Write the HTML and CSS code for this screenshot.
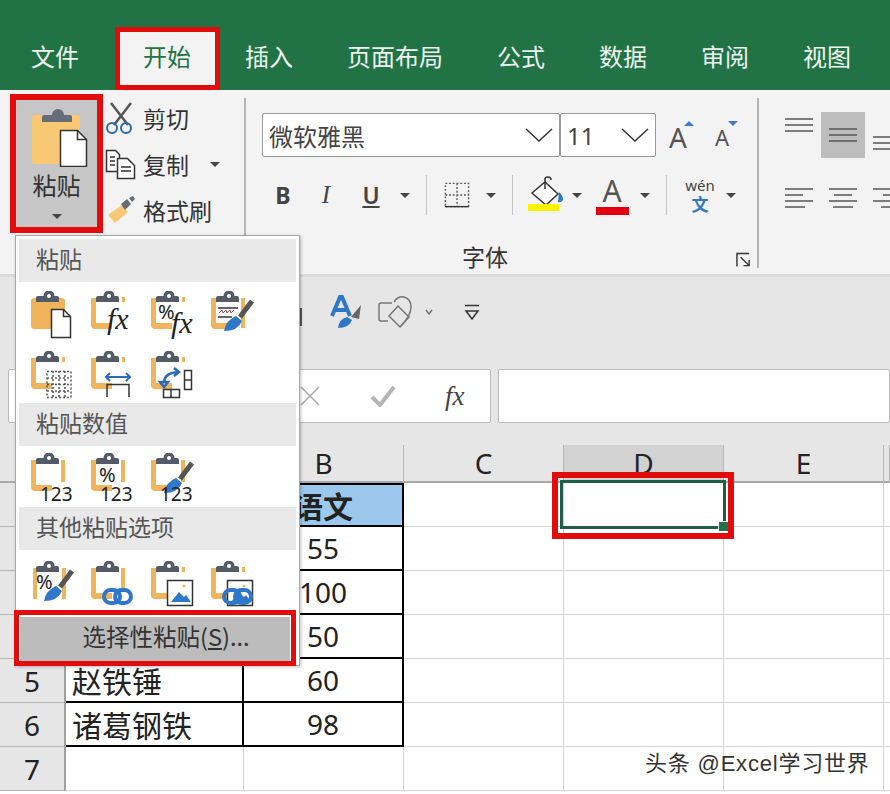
FILE: index.html
```html
<!DOCTYPE html>
<html lang="zh-CN">
<head>
<meta charset="utf-8">
<title>Excel 粘贴</title>
<link rel="stylesheet" href="styles.css">
</head>
<body>
<svg class="defs" aria-hidden="true">
  <symbol id="clip" viewBox="0 0 44 48"><path class="f-clip" d="M6 11V7q0-2 2-2h5.500a5.500 5.500 0 0 1 11 0H27q2 0 2 2v4z"/><circle class="f-white" cx="19" cy="5" r="2"/></symbol>
  <symbol id="left" viewBox="0 0 44 48"><path class="f-or" d="M1 7h5v25h16v6H5q-4 0-4-4z"/></symbol>
  <symbol id="sr" viewBox="0 0 44 48"><path class="f-or" d="M32 6h3v5h-3z"/></symbol>
  <symbol id="lr" viewBox="0 0 44 48"><path class="f-or" d="M31 7h4v22h-4z"/></symbol>
  <symbol id="brush" viewBox="0 0 44 48"><path class="s-dk5" d="M30 26 42 10"/><path class="f-bl" d="M14 40q2-11 12-15l6 5q-4 10-18 10z"/></symbol>
  <symbol id="link" viewBox="0 0 44 48"><rect class="s-bl" x="14" y="29" width="16" height="13" rx="6.500"/><rect class="s-bl" x="25" y="29" width="16" height="13" rx="6.500"/></symbol>
  <symbol id="pic" viewBox="0 0 44 48"><rect class="f-wd" x="17.500" y="19.500" width="25" height="25"/><path class="f-bl" d="M21 41l8-10 5 5 2-2 5 7z"/><circle class="f-or" cx="34" cy="25" r="1.500"/></symbol>
</svg>

<div class="app">
  <nav class="tabs">
    <div class="tab tab-first">文件</div>
    <div class="tab tab-on">开始</div>
    <div class="tab">插入</div>
    <div class="tab">页面布局</div>
    <div class="tab">公式</div>
    <div class="tab">数据</div>
    <div class="tab">审阅</div>
    <div class="tab">视图</div>
  </nav>

  <section class="ribbon">
    <div class="group group-clip">
      <div class="paste">
        <svg class="paste-ico" viewBox="0 0 56 58"><rect class="f-or2" y="6" width="48" height="49" rx="3"/><path class="f-clip2" d="M10 13V8q0-2 2-2h8a6 6 0 0 1 12 0h6q2 0 2 2v5z"/><path class="f-wd" d="M28.500 21.500h17l9 9v27h-26z"/><path class="l-dk" d="M45.500 21.500v9h9"/></svg>
        <span class="paste-text">粘贴</span>
        <i class="caret"></i>
      </div>
      <div class="clip-list">
        <div class="clip-row">
          <svg class="clip-ico" viewBox="0 0 32 32"><path class="l-dk2" d="M6 1l17 22M26 1 9 23"/><circle class="s-bl2" cx="7" cy="26" r="5"/><circle class="s-bl2" cx="21" cy="26" r="5"/></svg>
          <span>剪切</span>
        </div>
        <div class="clip-row">
          <svg class="clip-ico" viewBox="0 0 32 32"><path class="f-wd" d="M1.500 2.500h9l4 4v17h-13z"/><path class="f-wd" d="M12.500 10.500h10l7 7v13h-17z"/><path class="l-dk" d="M5 9h5M5 13h5M5 17h5M16 19h10M16 23h10"/></svg>
          <span>复制</span>
          <i class="caret caret-copy"></i>
        </div>
        <div class="clip-row">
          <svg class="clip-ico" viewBox="0 0 32 32"><path class="f-or2" d="M3 21 17 11l6 7-13 11z"/><path class="f-clip2" d="M16 10l6-5 4 5-6 6z"/><path class="f-clip2" d="M24 4l4-2 2 3-3 3z"/></svg>
          <span>格式刷</span>
        </div>
      </div>
    </div>

    <div class="group group-font">
      <div class="font-top">
        <div class="select select-name"><span>微软雅黑</span><svg class="chev" viewBox="0 0 28 14"><path d="M1 1l13 12L27 1"/></svg></div>
        <div class="select select-size"><span>11</span><svg class="chev" viewBox="0 0 28 14"><path d="M1 1l13 12L27 1"/></svg></div>
        <div class="grow"><span class="a-big">A</span><i class="tri tri-up"></i></div>
        <div class="grow grow-down"><span class="a-small">A</span><i class="tri tri-down"></i></div>
      </div>
      <div class="font-tools">
        <span class="tool tool-b">B</span>
        <span class="tool tool-i">I</span>
        <span class="tool tool-u">U</span>
        <i class="caret caret-tool"></i>
        <i class="sep"></i>
        <svg class="border-ico" viewBox="0 0 28 28"><path class="l-dash" d="M1.500 1.500h25v25h-25zM14 1.500v25M1.500 14h25"/><path class="l-dk" d="M1 26.500h26"/></svg>
        <i class="caret caret-tool"></i>
        <i class="sep"></i>
        <svg class="fill-ico" viewBox="0 0 38 36"><path class="f-wd" d="M4 17 17 6l13 12-12 11z"/><path class="l-dk" d="M17 13V3q0-2 3-2t3 3"/><path class="f-bl" d="M31 16q4 3 4 8-2 3-5 2z"/><rect class="f-yellow" y="28" width="31" height="7"/></svg>
        <i class="caret caret-tool caret-fill"></i>
        <div class="color-a"><span>A</span><i class="color-bar"></i></div>
        <i class="caret caret-tool"></i>
        <i class="sep"></i>
        <div class="wen"><span class="wen-top">wén</span><span class="wen-bot">文</span></div>
        <i class="caret caret-tool"></i>
      </div>
      <div class="font-label">字体
        <svg class="launch" viewBox="0 0 16 16"><path class="l-dk" d="M1 15V1h13M5 5l9 9M14 8v6H8"/></svg>
      </div>
    </div>

    <div class="group-align">
      <div class="align-row align-row-top">
        <div class="align"><svg class="al-top" viewBox="0 0 28 14"><path class="l-al" d="M0 1h28M0 7h28M0 13h28"/></svg></div>
        <div class="align align-on"><svg viewBox="0 0 28 14"><path class="l-al" d="M0 1h28M0 7h28M0 13h28"/></svg></div>
        <div class="align"><svg class="al-bot" viewBox="0 0 28 14"><path class="l-al" d="M0 1h28M0 7h28M0 13h28"/></svg></div>
      </div>
      <div class="align-row">
        <div class="align"><svg class="al-two" viewBox="0 0 28 20"><path class="l-al" d="M0 1h28M0 7h18M0 13h28M0 19h20"/></svg></div>
        <div class="align"><svg class="al-two" viewBox="0 0 28 20"><path class="l-al" d="M0 1h28M5 7h18M0 13h28M4 19h20"/></svg></div>
        <div class="align"><svg class="al-two" viewBox="0 0 28 20"><path class="l-al" d="M0 1h28M10 7h18M0 13h28M8 19h20"/></svg></div>
      </div>
    </div>
  </section>

  <section class="quick">
    <i class="quick-bar"></i>
    <svg class="q-style" viewBox="0 0 32 34"><path class="l-blA" d="M2 21 10 2h2l8 19M5 15h12"/><path class="f-gray" d="M21 22 31 10l-2 14z"/><path class="f-bl" d="M8 33q1-9 9-11l5 3q-3 8-14 8z"/></svg>
    <svg class="q-shape" viewBox="0 0 34 34"><path class="l-gr" d="M14 8H3q-2 0-2 2v14q0 2 2 2h7M16 7q4-6 10-5 7 2 7 10 0 9-11 20"/><path class="l-gr" d="M20 11l11 11-9 10-11-11z"/></svg>
    <svg class="q-mini" viewBox="0 0 8 6"><path class="l-gr" d="M1 1l3 4 3-4"/></svg>
    <svg class="q-more" viewBox="0 0 16 16"><path class="l-dk" d="M1 1.500h14M2 7l6 8 6-8z"/></svg>
  </section>

  <section class="formula">
    <div class="name-box"></div>
    <div class="fx-box">
      <svg class="fx-x" viewBox="0 0 20 20"><path class="l-lt" d="M1 1l18 18M19 1 1 19"/></svg>
      <svg class="fx-ok" viewBox="0 0 26 22"><path class="l-ok" d="M2 12l8 8L24 2"/></svg>
      <span class="fx-text">fx</span>
    </div>
    <div class="fx-input"></div>
  </section>

  <section class="sheet">
    <div class="hd corner"></div>
    <div class="hd">A</div><div class="hd">B</div><div class="hd">C</div><div class="hd hd-on">D</div><div class="hd">E</div><div class="hd"></div>

    <div class="rn">1</div><div class="c t tl tt">姓名</div><div class="c t tt c-head">语文</div><div class="c"></div><div class="c"></div><div class="c"></div><div class="c"></div>
    <div class="rn">2</div><div class="c t tl"></div><div class="c t ctr">55</div><div class="c"></div><div class="c"></div><div class="c"></div><div class="c"></div>
    <div class="rn">3</div><div class="c t tl"></div><div class="c t ctr">100</div><div class="c"></div><div class="c"></div><div class="c"></div><div class="c"></div>
    <div class="rn">4</div><div class="c t tl"></div><div class="c t ctr">50</div><div class="c"></div><div class="c"></div><div class="c"></div><div class="c"></div>
    <div class="rn">5</div><div class="c t tl">赵铁锤</div><div class="c t ctr">60</div><div class="c"></div><div class="c"></div><div class="c"></div><div class="c"></div>
    <div class="rn">6</div><div class="c t tl">诸葛钢铁</div><div class="c t ctr">98</div><div class="c"></div><div class="c"></div><div class="c"></div><div class="c"></div>
    <div class="rn">7</div><div class="c"></div><div class="c"></div><div class="c"></div><div class="c"></div><div class="c"></div><div class="c"></div>
  </section>

  <div class="cursor"><i class="handle"></i></div>

  <aside class="menu">
    <div class="menu-head">粘贴</div>
    <div class="icons icons-a">
      <svg class="pi" viewBox="0 0 44 48"><rect class="f-or" x="1" y="7" width="34" height="31" rx="3"/><use href="#clip"/><path class="f-wd" d="M21.500 18.500h12l7 7v21h-19z"/><path class="l-dk" d="M33.500 18.500v7h7"/></svg>
      <svg class="pi" viewBox="0 0 44 48"><use href="#left"/><use href="#sr"/><use href="#clip"/><text class="t-fx" x="17" y="38">fx</text></svg>
      <svg class="pi" viewBox="0 0 44 48"><use href="#left"/><use href="#sr"/><use href="#clip"/><text class="t-pct" x="8" y="28">%</text><text class="t-fx" x="21" y="42">fx</text></svg>
      <svg class="pi" viewBox="0 0 44 48"><use href="#left"/><path class="f-or" d="M31 7h4v30h-4z"/><use href="#clip"/><path class="f-wd2" d="M6 14h24v18H6z"/><path class="l-dk" d="M8 17h20M8 26h14"/><path class="l-red" d="M9 22l3-3 1 3 3-3 1 3 3-3 1 3 3-3"/><use href="#brush"/></svg>
      <svg class="pi" viewBox="0 0 44 48"><use href="#left"/><use href="#sr"/><use href="#clip"/><path class="l-dash" d="M17 20.500h24v26H17zM29 20v27M17 33.500h24M23 20v27M35 20v27M17 27h24M17 40h24"/></svg>
      <svg class="pi" viewBox="0 0 44 48"><use href="#left"/><use href="#sr"/><use href="#clip"/><path class="l-blue" d="M16 26h24M20 22l-4 4 4 4M36 22l4 4-4 4"/><path class="l-dk" d="M17 46V33.500h22V46"/></svg>
      <svg class="pi" viewBox="0 0 44 48"><use href="#left"/><use href="#sr"/><use href="#clip"/><path class="l-blue2" d="M14 32q0-10 14-11M24 17l5 4-5 4M14 36l-4-5 8 0z"/><path class="f-wd" d="M34.500 19.500h7v19h-7zM13.500 38.500h16v8h-16z"/><path class="l-dk" d="M34 29h8M21 38v8"/></svg>
    </div>
    <div class="menu-head">粘贴数值</div>
    <div class="icons icons-b">
      <svg class="pi" viewBox="0 0 44 48"><use href="#left"/><use href="#lr"/><use href="#clip"/><text class="t-123" x="10" y="48">123</text></svg>
      <svg class="pi" viewBox="0 0 44 48"><use href="#left"/><use href="#lr"/><use href="#clip"/><text class="t-pct" x="9" y="29">%</text><text class="t-123" x="10" y="48">123</text></svg>
      <svg class="pi" viewBox="0 0 44 48"><use href="#left"/><use href="#lr"/><use href="#clip"/><use href="#brush"/><text class="t-123" x="10" y="48">123</text></svg>
    </div>
    <div class="menu-head menu-head-c">其他粘贴选项</div>
    <div class="icons icons-c">
      <svg class="pi" viewBox="0 0 44 48"><path class="f-or" d="M3 7h4v31H3zM32 7h4v31h-4z"/><use href="#clip"/><text class="t-pct" x="6" y="28">%</text><use href="#brush"/></svg>
      <svg class="pi" viewBox="0 0 44 48"><use href="#left"/><use href="#lr"/><use href="#clip"/><use href="#link"/></svg>
      <svg class="pi" viewBox="0 0 44 48"><use href="#left"/><use href="#sr"/><use href="#clip"/><use href="#pic"/></svg>
      <svg class="pi" viewBox="0 0 44 48"><use href="#left"/><use href="#sr"/><use href="#clip"/><use href="#pic"/><use href="#link"/></svg>
    </div>
    <div class="menu-item">选择性粘贴(<u>S</u>)...</div>
  </aside>

  <i class="mark mark-tab"></i>
  <i class="mark mark-paste"></i>
  <i class="mark mark-special"></i>
  <i class="mark mark-cell"></i>

  <div class="watermark">头条 @Excel学习世界</div>
</div>
</body>
</html>
```

FILE: styles.css
```css
* { box-sizing: border-box; }
html, body { margin: 0; padding: 0; }
body { width: 890px; height: 794px; overflow: hidden; background: #fff; font-family: "Noto Sans CJK SC", "Noto Sans", sans-serif; color: #333; }
i { display: block; font-style: normal; }
svg { display: block; flex: none; }
.defs { position: absolute; width: 0; height: 0; }
.app { position: relative; width: 890px; height: 794px; overflow: hidden; }

/* svg paints */
.f-clip { fill: #555b66; }
.f-clip2 { fill: #666c78; }
.f-white { fill: #fff; }
.f-or { fill: #efb45c; }
.f-or2 { fill: #f8c874; }
.f-bl { fill: #2f77c8; }
.f-gray { fill: #666; }
.f-yellow { fill: #fff200; }
.f-wd { fill: #fff; stroke: #333; stroke-width: 1.500; }
.f-wd2 { fill: #fafafa; }
.l-dk { fill: none; stroke: #333; stroke-width: 1.500; }
.l-dk2 { fill: none; stroke: #555; stroke-width: 2.500; }
.s-bl { fill: none; stroke: #2f77c8; stroke-width: 4; }
.s-bl2 { fill: none; stroke: #2b6aa8; stroke-width: 2; }
.s-dk5 { fill: none; stroke: #555; stroke-width: 5; }
.l-dash { fill: none; stroke: #555; stroke-width: 1.500; stroke-dasharray: 2 2; }
.l-red { fill: none; stroke: #a0554a; stroke-width: 1; }
.l-blue { fill: none; stroke: #2b6ab8; stroke-width: 2; }
.l-blue2 { fill: none; stroke: #2b6ab8; stroke-width: 2.500; }
.l-al { fill: none; stroke: #555; stroke-width: 1.600; }
.l-blA { fill: none; stroke: #2f77c8; stroke-width: 4; }
.l-gr { fill: none; stroke: #777; stroke-width: 1.500; }
.l-lt { fill: none; stroke: #aaa; stroke-width: 1.500; }
.l-ok { fill: none; stroke: #b4b4b4; stroke-width: 4; }
.t-fx { font-family: "Liberation Serif", serif; font-style: italic; font-size: 30px; fill: #222; }
.t-pct { font-family: "Noto Sans", sans-serif; font-size: 20px; fill: #222; }
.t-123 { font-family: "Noto Sans", sans-serif; font-size: 19px; fill: #222; }

/* tabs */
.tabs { display: flex; align-items: flex-end; height: 90px; padding-left: 4px; background: #217346; }
.tab { height: 63px; padding: 11px 27px 0; font-size: 24px; line-height: 36px; color: #eef3ef; white-space: nowrap; }
.tab-first { margin-right: 10px; }
.tab-on { background: #f3f3f3; color: #217346; }

/* ribbon */
.ribbon { display: flex; height: 187px; background: #f3f3f3; border-bottom: 3px solid #dcdcdc; }
.group { height: 170px; margin-top: 8px; border-right: 2px solid #b4b4b4; }
.group-clip { display: flex; flex: none; width: 246px; }
.paste { display: flex; flex-direction: column; align-items: center; flex: none; width: 83px; height: 130px; margin: 2px 0 0 15px; padding-top: 9px; background: #c6c6c6; }
.paste-ico { width: 56px; height: 58px; margin-left: 6px; }
.paste-text { margin-top: 0; font-size: 24px; line-height: 36px; color: #333; }
.caret { width: 0; height: 0; border-left: 5px solid transparent; border-right: 5px solid transparent; border-top: 5px solid #444; }
.paste .caret { margin-top: 11px; }
.clip-list { display: flex; flex-direction: column; margin-top: -3px; padding-left: 7px; }
.clip-row { display: flex; align-items: center; height: 46px; font-size: 23px; color: #333; }
.clip-row span { margin-left: 6px; }
.clip-ico { width: 32px; height: 32px; }
.caret-copy { margin-left: 21px; }

.group-font { position: relative; flex: none; width: 513px; padding-left: 16px; }
.font-top { display: flex; align-items: flex-start; height: 44px; margin-top: 15px; }
.select { display: flex; align-items: center; justify-content: space-between; height: 44px; background: #fff; border: 1px solid #9a9a9a; border-radius: 2px; font-size: 24px; color: #444; }
.select-name { width: 298px; padding: 0 6px 0 6px; }
.select-size { width: 96px; padding: 0 6px; font-family: "Noto Sans", sans-serif; }
.chev { width: 28px; height: 14px; margin-right: 0; }
.chev path { fill: none; stroke: #333; stroke-width: 1.500; }
.grow { position: relative; width: 46px; margin-left: 10px; font-family: "Noto Sans", sans-serif; color: #555; line-height: 48px; }
.grow-down { margin-left: -2px; }
.a-big { font-size: 28px; margin-left: 3px; }
.a-small { font-size: 22px; margin-left: 5px; }
.tri { position: absolute; width: 0; height: 0; border-left: 5px solid transparent; border-right: 5px solid transparent; }
.tri-up { top: 8px; left: 18px; border-bottom: 5px solid #3d7cc9; }
.tri-down { top: 8px; left: 18px; border-top: 5px solid #3d7cc9; }

.font-tools { display: flex; align-items: center; height: 42px; margin-top: 17px; }
.tool { text-align: center; font-family: "Noto Sans", sans-serif; font-size: 23px; color: #444; }
.tool-b { width: 42px; font-weight: 700; }
.tool-i { width: 44px; font-style: italic; font-family: "Liberation Serif", serif; font-size: 25px; }
.tool-u { width: 46px; font-weight: 600; text-decoration: underline; }
.caret-tool { margin: 0 11px 0 6px; }
.sep { width: 1px; height: 40px; margin: 0 11px 0 5px; background: #c4c4c4; }
.border-ico { width: 26px; height: 26px; margin: 0 10px 0 6px; }
.fill-ico { width: 38px; height: 36px; margin: -3px 2px 0 4px; }
.caret-fill { margin-left: 4px; margin-right: 13px; }
.color-a { display: flex; flex-direction: column; align-items: center; width: 34px; margin-right: 5px; font-family: "Noto Sans", sans-serif; font-size: 30px; line-height: 30px; color: #555; }
.color-bar { width: 33px; height: 8px; margin-top: 1px; background: #e2000f; }
.wen { display: flex; flex-direction: column; align-items: center; width: 36px; margin: 0 2px 0 4px; }
.wen-top { font-family: "Noto Sans", sans-serif; font-size: 15px; line-height: 17px; color: #444; }
.wen-bot { font-size: 17px; line-height: 19px; font-weight: 700; color: #2f77c8; }
.font-label { position: absolute; left: 216px; right: 0; top: 142px; font-size: 23px; line-height: 32px; color: #333; }
.launch { position: absolute; right: 6px; top: 12px; width: 15px; height: 16px; }

.group-align { flex: none; padding-left: 18px; }
.align-row { display: flex; height: 46px; }
.align-row-top { margin-top: 22px; margin-bottom: 17px; }
.align { display: flex; align-items: center; justify-content: center; flex: none; width: 44px; height: 46px; }
.align svg { width: 28px; height: 14px; }
.align svg.al-two { width: 28px; height: 20px; }
.align .al-top { transform: translateY(-10px); }
.align .al-bot { transform: translateY(8px); }
.align-on { background: #bdbdbd; }

/* quick */
.quick { position: relative; display: flex; align-items: center; height: 92px; padding: 0 0 22px 330px; background: #e6e6e6; }
.quick-bar { position: absolute; left: 299px; top: 31px; width: 3px; height: 18px; background: #555; }
.q-style { width: 32px; height: 34px; }
.q-shape { width: 34px; height: 34px; margin-left: 16px; }
.q-mini { width: 8px; height: 6px; margin-left: 13px; }
.q-more { width: 16px; height: 16px; margin-left: 31px; }

/* formula */
.formula { display: flex; height: 54px; padding-left: 8px; background: #e6e6e6; }
.name-box { width: 40px; background: #fff; border: 1px solid #bcbcbc; border-radius: 2px; }
.fx-box { display: flex; align-items: center; width: 435px; margin-left: 8px; padding-left: 243px; background: #fff; border: 1px solid #bcbcbc; border-radius: 2px; }
.fx-x { width: 20px; height: 20px; }
.fx-ok { width: 26px; height: 22px; margin-left: 50px; }
.fx-text { margin-left: 49px; font-family: "Liberation Serif", serif; font-style: italic; font-size: 27px; color: #444; }
.fx-input { flex: 1; margin-left: 7px; background: #fff; border: 1px solid #bcbcbc; border-radius: 2px; }

/* sheet */
.sheet { display: grid; grid-template-columns: 66px 178px 160px 160px 160px 160px 6px; grid-template-rows: 38px repeat(7, 44px); width: 890px; padding-top: 22px; background: #e6e6e6; }
.hd { display: flex; align-items: center; justify-content: center; font-family: "Noto Sans", sans-serif; font-size: 28px; line-height: 36px; color: #222; background: #e6e6e6; border-right: 1px solid #b4b4b4; border-bottom: 2px solid #a8a8a8; }
.hd-on { background: #d2d2d2; }
.rn { display: flex; align-items: center; justify-content: center; font-family: "Noto Sans", sans-serif; font-size: 28px; color: #222; background: #e6e6e6; border-right: 2px solid #a0a0a0; border-bottom: 1px solid #b4b4b4; }
.c { display: flex; align-items: center; padding-left: 6px; font-size: 30px; color: #222; background: #fff; border-right: 1px solid #d4d4d4; border-bottom: 1px solid #d4d4d4; white-space: nowrap; }
.t { border-right: 2px solid #000; border-bottom: 2px solid #000; }
.tt { border-top: 2px solid #000; }
.ctr { justify-content: center; padding-left: 0; font-family: "Noto Sans", sans-serif; font-size: 28px; }
.c-head { justify-content: center; padding-left: 0; font-weight: 700; font-size: 30px; background: #9cc8ee; }
.cursor { position: absolute; left: 560px; top: 480px; width: 166px; height: 49px; border: 3px solid #1f5f47; }
.handle { position: absolute; right: -6px; bottom: -6px; width: 11px; height: 11px; background: #217346; border: 1px solid #fff; }

/* menu */
.menu { position: absolute; left: 15px; top: 235px; width: 285px; height: 431px; padding: 3px 3px 0 3px; background: #fff; border: 1px solid #a8a8a8; box-shadow: 1px 1px 3px rgba(0,0,0,.25); }
.menu-head { height: 43px; padding-left: 17px; font-size: 23px; line-height: 39px; color: #555; background: #e9e9e9; }
.icons { display: grid; grid-template-columns: repeat(4, 60px); align-content: start; row-gap: 12px; padding-left: 11px; }
.icons-a { height: 121px; padding-top: 9px; }
.icons-b { height: 61px; padding-top: 7px; }
.icons-c { height: 61px; padding-top: 11px; }
.pi { width: 44px; height: 48px; overflow: visible; }
.menu-item { height: 44px; margin: 6px 6px 0 1px; padding-left: 22px; font-size: 23.500px; line-height: 38px; text-align: center; color: #333; background: #bcbcbc; }

/* red highlights */
.mark { position: absolute; border: 5px solid #e30c0c; }
.mark-tab { left: 115px; top: 27px; width: 105px; height: 63px; }
.mark-paste { left: 10px; top: 94px; width: 93px; height: 139px; border-width: 6px; }
.mark-special { left: 14px; top: 610px; width: 282px; height: 56px; }
.mark-cell { left: 552px; top: 472px; width: 182px; height: 67px; border-width: 6px; }

.watermark { position: absolute; left: 645px; top: 745px; font-size: 22px; letter-spacing: .8px; line-height: 38px; font-family: "Liberation Sans", "Noto Sans CJK SC", sans-serif; color: #333; white-space: nowrap; text-shadow: 1px 1px 0 #fff, -1px -1px 0 #fff; }
```
